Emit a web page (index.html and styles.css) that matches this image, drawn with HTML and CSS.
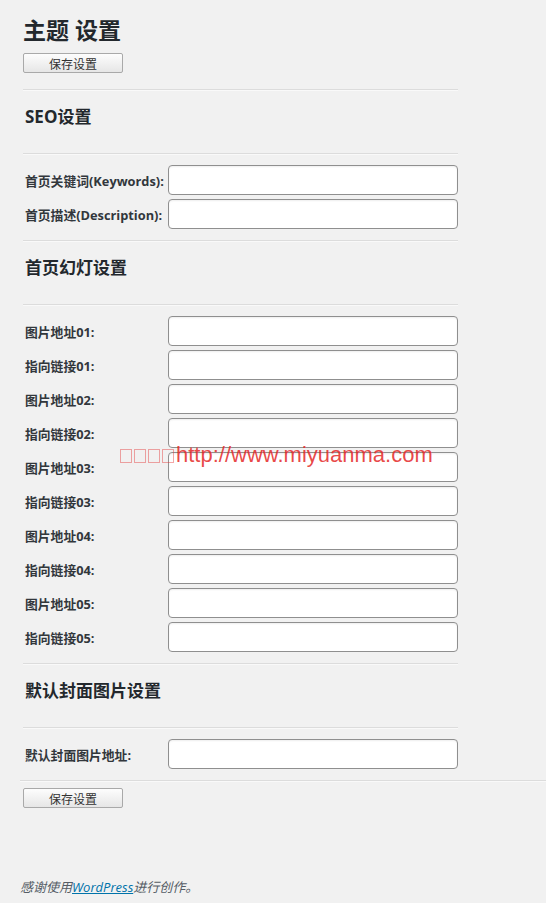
FILE: index.html
```html
<!DOCTYPE html>
<html lang="zh-CN">
<head>
    <meta charset="UTF-8">
    <title>主题 设置</title>
    <link rel="stylesheet" href="styles.css">
</head>
<body>
    <div class="wrap">
        <h2 class="page-title">主题 设置</h2>
        <button class="button">保存设置</button>

        <div class="settings">
            <hr class="line">
            <h3 class="section-title">SEO设置</h3>
            <hr class="line">
            <div class="fields">
                <label class="field-label">首页关键词(Keywords):</label>
                <input class="field-input" type="text">
                <label class="field-label">首页描述(Description):</label>
                <input class="field-input" type="text">
            </div>

            <hr class="line">
            <h3 class="section-title">首页幻灯设置</h3>
            <hr class="line">
            <div class="fields">
                <label class="field-label">图片地址01:</label>
                <input class="field-input" type="text">
                <label class="field-label">指向链接01:</label>
                <input class="field-input" type="text">
                <label class="field-label">图片地址02:</label>
                <input class="field-input" type="text">
                <label class="field-label">指向链接02:</label>
                <input class="field-input" type="text">
                <label class="field-label">图片地址03:</label>
                <input class="field-input" type="text">
                <label class="field-label">指向链接03:</label>
                <input class="field-input" type="text">
                <label class="field-label">图片地址04:</label>
                <input class="field-input" type="text">
                <label class="field-label">指向链接04:</label>
                <input class="field-input" type="text">
                <label class="field-label">图片地址05:</label>
                <input class="field-input" type="text">
                <label class="field-label">指向链接05:</label>
                <input class="field-input" type="text">
            </div>

            <hr class="line">
            <h3 class="section-title">默认封面图片设置</h3>
            <hr class="line">
            <div class="fields">
                <label class="field-label">默认封面图片地址:</label>
                <input class="field-input" type="text">
            </div>
        </div>

        <hr class="line line-full">
        <button class="button button-bottom">保存设置</button>
    </div>

    <p class="footer-text">感谢使用<a href="#">WordPress</a>进行创作。</p>

    <div class="watermark">
        <span class="tofu"></span><span class="tofu"></span><span class="tofu"></span><span class="tofu"></span>http://www.miyuanma.com
    </div>
</body>
</html>
```

FILE: styles.css
```css
body {
    background-color: #f1f1f1;
    color: #23282d;
    font-family: "Open Sans", "Noto Sans CJK SC", sans-serif;
    margin: 0;
    padding: 0;
    min-height: 903px;
    position: relative;
}

.wrap {
    padding-left: 20px;
}

.page-title {
    margin: 0 0 0 3px;
    padding-top: 16px;
    font-size: 23px;
    line-height: 29px;
    font-weight: 700;
}

.button {
    display: block;
    margin: 8px 0 0 3px;
    width: 100px;
    height: 20px;
    padding: 0;
    border: 1px solid #a9a9a9;
    border-radius: 2px;
    background: linear-gradient(#fdfdfd, #e6e6e6);
    font-family: "Noto Sans CJK SC", sans-serif;
    font-size: 12px;
    color: #333;
}

.button-bottom {
    margin-top: 6px;
}

.settings {
    width: 435px;
    margin-left: 3px;
    margin-top: 16px;
}

.line {
    margin: 0;
    border: 0;
    border-top: 1px solid #dcdcdc;
    border-bottom: 1px solid #f9f9f9;
}

.section-title {
    margin: 16px 0 26px 2px;
    font-size: 17px;
    line-height: 20px;
    font-weight: 700;
}

.fields {
    display: grid;
    grid-template-columns: 143px 290px;
    row-gap: 4px;
    padding: 10px 0 11px 2px;
    align-items: center;
}

.field-label {
    font-size: 12.8px;
    font-weight: 700;
    color: #32373c;
}

.field-input {
    box-sizing: border-box;
    width: 290px;
    height: 30px;
    margin: 0;
    border: 1px solid #8f8f8f;
    border-radius: 4px;
    background-color: #fff;
    box-shadow: inset 0 1px 2px rgba(0, 0, 0, 0.07);
}

.footer-text {
    margin: 69px 0 0 20px;
    font-size: 13px;
    font-style: italic;
    color: #555d66;
}

.footer-text a {
    color: #0073aa;
}

/* watermark lying over the form */
.watermark {
    position: absolute;
    left: 120px;
    top: 444px;
    font-family: "Liberation Sans", Arial, sans-serif;
    font-size: 22px;
    line-height: 22px;
    color: rgba(228, 40, 40, 0.85);
}

.watermark .tofu {
    display: inline-block;
    box-sizing: border-box;
    width: 12px;
    height: 14px;
    margin-right: 2px;
    border: 1px solid rgba(228, 60, 60, 0.45);
    vertical-align: -1px;
}
```
